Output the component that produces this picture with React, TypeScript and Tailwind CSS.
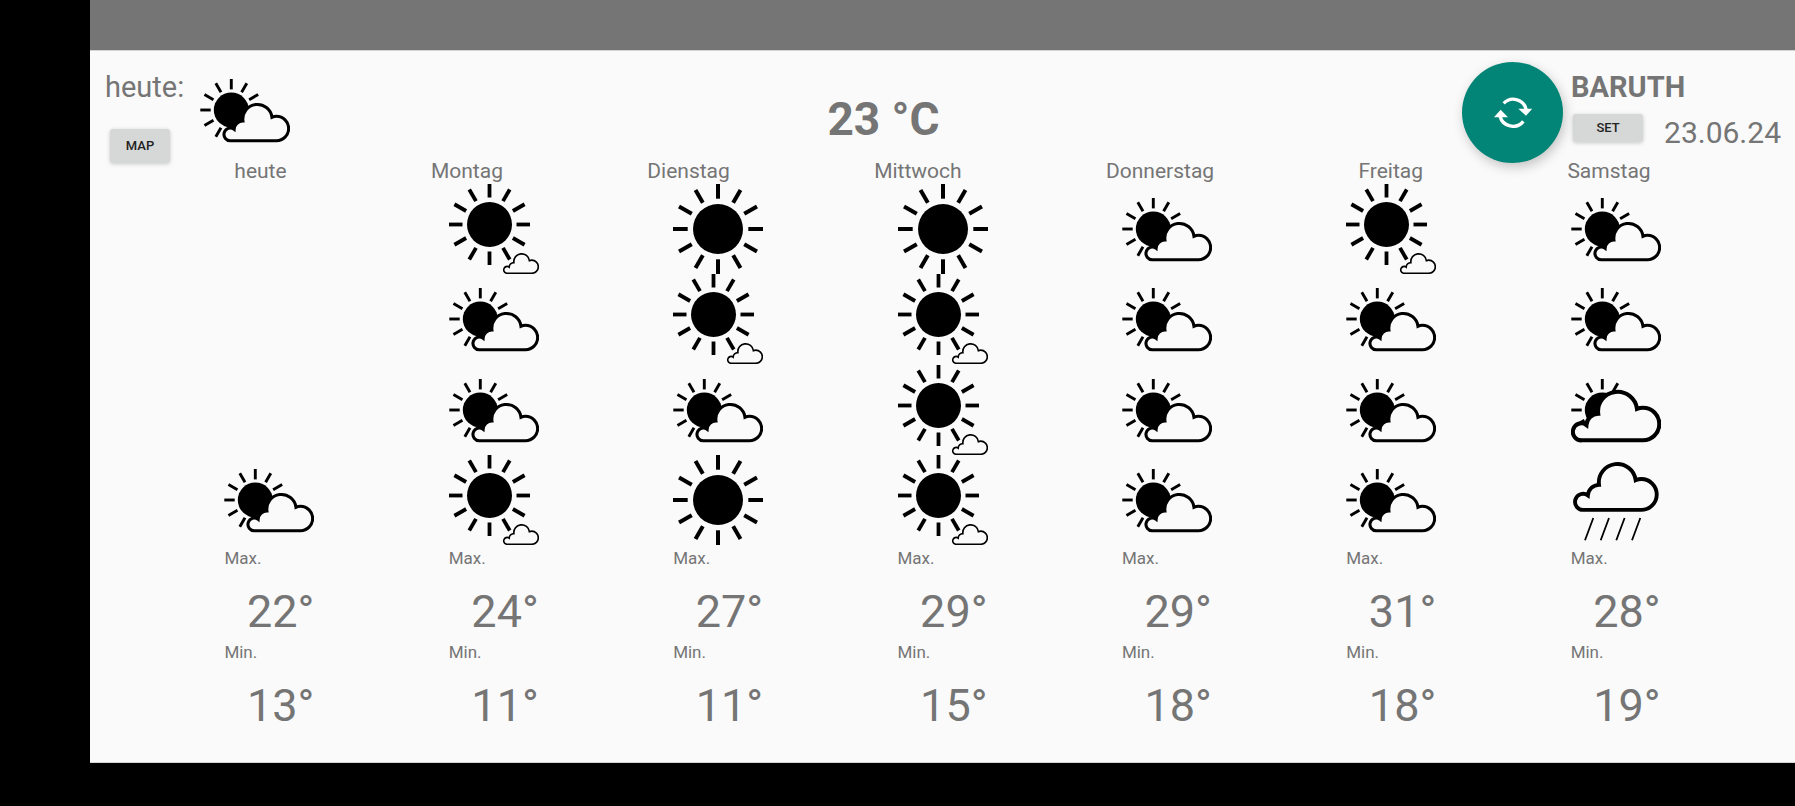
import React from "react";

type Weather = "sunny" | "fair" | "partly" | "cloudy" | "rain";

interface Day {
  name: string;
  icons: (Weather | null)[];
  max: number;
  min: number;
}

const days: Day[] = [
  { name: "heute", icons: [null, null, null, "partly"], max: 22, min: 13 },
  { name: "Montag", icons: ["fair", "partly", "partly", "fair"], max: 24, min: 11 },
  { name: "Dienstag", icons: ["sunny", "fair", "partly", "sunny"], max: 27, min: 11 },
  { name: "Mittwoch", icons: ["sunny", "fair", "fair", "fair"], max: 29, min: 15 },
  { name: "Donnerstag", icons: ["partly", "partly", "partly", "partly"], max: 29, min: 18 },
  { name: "Freitag", icons: ["fair", "partly", "partly", "partly"], max: 31, min: 18 },
  { name: "Samstag", icons: ["partly", "partly", "cloudy", "rain"], max: 28, min: 19 },
];

const allRays = [0, 30, 60, 90, 120, 150, 180, 210, 240, 270, 300, 330];
const partRays = [0, 30, 60, 210, 240, 270, 300, 330];
const cloudyRays = [0, 30, 240, 270, 300, 330];

interface SunProps {
  cx: number;
  cy: number;
  r: number;
  from: number;
  to: number;
  width: number;
  rays: number[];
}

function Sun({ cx, cy, r, from, to, width, rays }: SunProps) {
  return (
    <g>
      <circle cx={cx} cy={cy} r={r} fill="#000" />
      {rays.map((a) => (
        <line
          key={a}
          x1={cx}
          y1={cy - from}
          x2={cx}
          y2={cy - to}
          stroke="#000"
          strokeWidth={width}
          transform={`rotate(${a} ${cx} ${cy})`}
        />
      ))}
    </g>
  );
}

function Cloud({ transform }: { transform?: string }) {
  return (
    <path
      transform={transform}
      d="M11 75.3H72A16.3 16.3 0 0 0 72 42.7A16.3 16.3 0 0 0 66 43.9A19.3 19.3 0 0 0 27.2 48.8A12 12 0 0 0 15.4 60A8.5 8.5 0 1 0 11 75.3Z"
      fill="#fafafa"
      stroke="#000"
      strokeWidth="4.1"
    />
  );
}

function WeatherIcon({ kind }: { kind: Weather }) {
  return (
    <svg viewBox="0 0 90 90" className="size-[90px]" role="img" aria-label={kind}>
      {kind === "sunny" && <Sun cx={45} cy={45} r={25} from={30.3} to={45} width={4} rays={allRays} />}
      {kind === "fair" && (
        <>
          <Sun cx={40.5} cy={40.5} r={22.5} from={27} to={40.5} width={3.8} rays={allRays} />
          <Cloud transform="translate(54 59.1) scale(0.4)" />
        </>
      )}
      {kind === "partly" && (
        <>
          <Sun cx={31.3} cy={45} r={17.5} from={20.6} to={31} width={2.9} rays={partRays} />
          <Cloud transform="translate(22.6 19.4) scale(0.748)" />
        </>
      )}
      {kind === "cloudy" && (
        <>
          <Sun cx={31.3} cy={45} r={17.5} from={20.6} to={31} width={2.9} rays={cloudyRays} />
          <Cloud />
        </>
      )}
      {kind === "rain" && (
        <>
          <Cloud transform="translate(2.3 -16.3) scale(0.945)" />
          <path
            d="M22.3 63L14 85.3M38 63L29.7 85.3M53.6 63L45.3 85.3M69.3 63L61 85.3"
            stroke="#000"
            strokeWidth="1.8"
            fill="none"
          />
        </>
      )}
    </svg>
  );
}

function RefreshIcon() {
  return (
    <svg viewBox="160 170 114 93" className="h-[31px] w-[38px]" aria-hidden="true">
      <path
        d="M189 189A40 40 0 0 1 257 209M248 243A40 40 0 0 1 178 227"
        fill="none"
        stroke="#fff"
        strokeWidth="10"
      />
      <path d="M233 205H275L256 226ZM160 231H202L180 208Z" fill="#fff" />
    </svg>
  );
}

function Temperature({ label, value }: { label: string; value: number }) {
  return (
    <div className="w-[90px]">
      <div className="text-[17px] leading-[26px]">{label}</div>
      <div className="pt-[14px] text-right text-[45px] leading-[54px]">{value}°</div>
    </div>
  );
}

const smallButton =
  "rounded-[3px] bg-[#d6d8d7] text-[13px] leading-[16px] font-medium text-[#222] shadow-[0_1px_4px_rgba(0,0,0,0.2)]";

export default function App() {
  return (
    <div className="flex min-h-screen flex-col bg-black pb-[43px] pl-[90px] font-[Roboto,sans-serif] text-[#757575]">
      <div className="h-[50px] bg-[#757575]" />
      <main className="flex-1 border-t border-b border-[#d4d4d4] bg-[#fafafa]">
        <header className="flex h-[108px] items-start pt-[11px] pr-[14px] pl-[15px]">
          <div className="flex w-[95px] flex-col items-start pt-[8px]">
            <span className="text-[29px] leading-[34px]">heute:</span>
            <button type="button" className={`${smallButton} mt-[25px] ml-[5px] h-[34px] w-[60px]`}>
              MAP
            </button>
          </div>
          <div className="pt-[3px]">
            <WeatherIcon kind="partly" />
          </div>
          <div className="flex-1 pt-[30px] pl-[15px] text-center text-[46px] leading-[54px] font-bold">23 °C</div>
          <button
            type="button"
            aria-label="Aktualisieren"
            className="z-10 flex size-[101px] shrink-0 items-center justify-center rounded-full bg-[#028576] shadow-[2px_4px_12px_rgba(0,0,0,0.22)]"
          >
            <RefreshIcon />
          </button>
          <div className="flex flex-col pt-[8px] pl-[8px]">
            <span className="text-[29px] leading-[34px] font-bold">BARUTH</span>
            <div className="flex items-start">
              <button type="button" className={`${smallButton} mt-[10px] ml-[2px] h-[28px] w-[70px]`}>
                SET
              </button>
              <span className="pt-[12px] pl-[21px] text-[30px] leading-[34px]">23.06.24</span>
            </div>
          </div>
        </header>

        <div className="flex justify-evenly pb-px text-[21px] leading-[24px]">
          {days.map((d) => (
            <span key={d.name}>{d.name}</span>
          ))}
        </div>

        <div className="flex justify-evenly">
          {days.map((d) => (
            <section key={d.name} aria-label={d.name} className="flex flex-col">
              <div className="flex h-[361px] w-[90px] flex-col justify-between">
                {d.icons.map((kind, i) => (
                  <div key={i} className="size-[90px]">
                    {kind && <WeatherIcon kind={kind} />}
                  </div>
                ))}
              </div>
              <Temperature label="Max." value={d.max} />
              <Temperature label="Min." value={d.min} />
            </section>
          ))}
        </div>
      </main>
    </div>
  );
}
